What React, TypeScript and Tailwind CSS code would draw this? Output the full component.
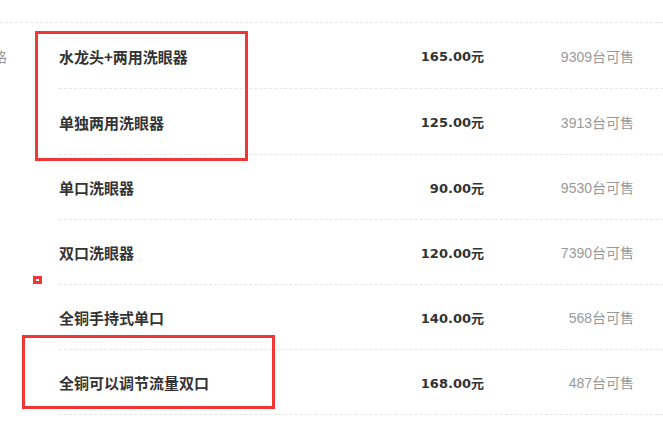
const rows = [
  { name: "水龙头+两用洗眼器", price: "165.00", stock: "9309", h: "h-[66px]" },
  { name: "单独两用洗眼器", price: "125.00", stock: "3913", h: "h-[66px]" },
  { name: "单口洗眼器", price: "90.00", stock: "9530", h: "h-[65px]" },
  { name: "双口洗眼器", price: "120.00", stock: "7390", h: "h-[65px]" },
  { name: "全铜手持式单口", price: "140.00", stock: "568", h: "h-[65px]" },
  { name: "全铜可以调节流量双口", price: "168.00", stock: "487", h: "h-[65px]" },
];

export default function App() {
  return (
    <div className="relative h-[429px] w-[663px] overflow-hidden bg-white font-['Liberation_Sans','Noto_Sans_CJK_SC',sans-serif]">
      <div className="pt-[22px]">
        <div className="flex flex-col border-t border-dashed border-[#e6e6e6]">
          {rows.map((r, i) => (
            <div key={r.name} className={`flex ${r.h}`}>
              <div className="w-[59px] shrink-0 pt-[3px]">
                {i === 0 && (
                  <div className="flex h-full items-center -ml-[7px] text-[14px] text-[#999]">格</div>
                )}
              </div>
              <div className="flex flex-1 items-center border-b border-dashed border-[#e6e6e6] pt-[3px] pr-[29px]">
                <div className="flex-1 text-[15px] font-semibold text-[#333] font-['Noto_Sans_CJK_SC',sans-serif]">
                  {r.name}
                </div>
                <div className="w-[120px] text-right text-[13px] font-bold text-[#333] font-['DejaVu_Sans','Noto_Sans_CJK_SC',sans-serif]">
                  {r.price}元
                </div>
                <div className="w-[150px] text-right text-[14px] text-[#999]">
                  {r.stock}台可售
                </div>
              </div>
            </div>
          ))}
        </div>
      </div>

      {/* annotation overlays */}
      <div className="absolute left-[35px] top-[31px] h-[130px] w-[213px] border-[3px] border-[#f23535]" />
      <div className="absolute left-[22px] top-[335px] h-[74px] w-[253px] border-[3px] border-[#f23535]" />
      <div className="absolute left-[33px] top-[276px] h-[8px] w-[9px] border-[3px] border-[#f23535]" />
    </div>
  );
}
